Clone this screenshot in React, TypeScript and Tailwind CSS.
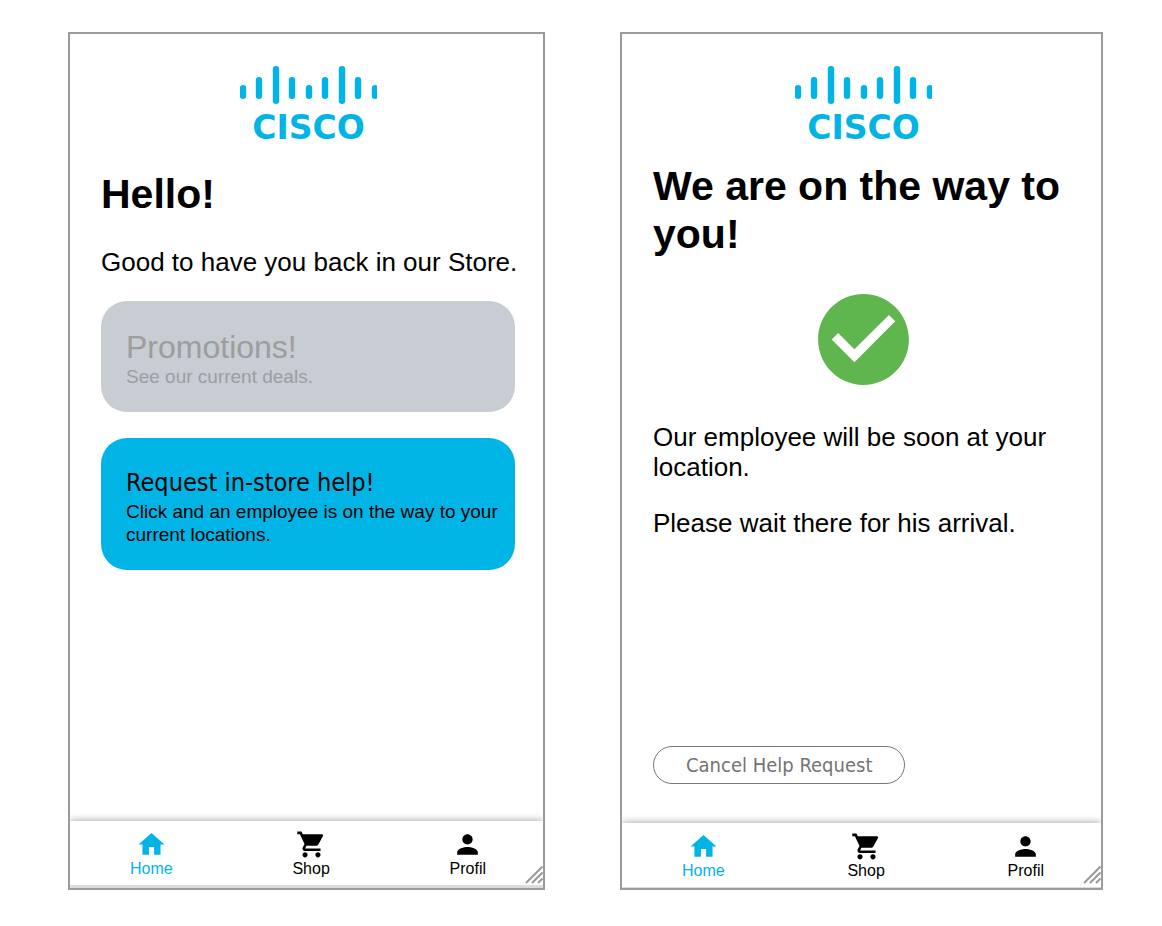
import type { ReactNode } from "react";
import { MdCheckCircle, MdHome, MdPerson, MdShoppingCart } from "react-icons/md";

const BARS: [number, number, number][] = [
  [3, 19, 33],
  [19, 11, 33],
  [36, 0, 38],
  [52, 11, 33],
  [69, 19, 33],
  [85, 11, 33],
  [102, 0, 38],
  [118, 11, 33],
  [135, 19, 33],
];

function Logo() {
  return (
    <svg width="137" height="84" viewBox="0 0 137 84" role="img" aria-label="Cisco" className="mx-auto block">
      {BARS.map(([x, top, bottom]) => (
        <rect key={x} x={x - 3.2} y={top} width="6.4" height={bottom - top} rx="3.2" fill="#00b5e6" />
      ))}
      <text
        x="68.5"
        y="72.5"
        textAnchor="middle"
        className="fill-[#00b5e6] font-['DejaVu_Sans',sans-serif] text-[33px] font-bold"
      >
        CISCO
      </text>
    </svg>
  );
}

function NavItem({ icon, label, active = false }: { icon: ReactNode; label: string; active?: boolean }) {
  return (
    <a
      href="#"
      aria-current={active ? "page" : undefined}
      className={`flex flex-col items-center text-[16px] leading-[18px] ${active ? "text-[#00b5e6]" : "text-black"}`}
    >
      {icon}
      {label}
    </a>
  );
}

function Phone({ children, footer }: { children: ReactNode; footer: string }) {
  return (
    <section className="relative flex min-h-[858px] min-w-0 flex-col border-2 border-[#9b9b9b] bg-white">
      <div className="flex flex-1 flex-col pt-8 pr-7 pl-[31px]">{children}</div>
      <div className="overflow-hidden pt-2">
        <nav className="flex h-[64px] justify-between bg-white pt-2 pr-[57px] pl-[60px] shadow-[0_0_8px_rgba(0,0,0,0.4)]">
          <NavItem active label="Home" icon={<MdHome size={31} />} />
          <NavItem label="Shop" icon={<MdShoppingCart size={31} />} />
          <NavItem label="Profil" icon={<MdPerson size={31} />} />
        </nav>
      </div>
      <div className={`bg-[#dcdcdc] ${footer}`} />
      <svg width="18" height="18" viewBox="0 0 18 18" className="absolute right-0 bottom-1" aria-hidden="true">
        <path d="M1 17 17.500 .5M7 17 17.500 6.500M13 17 17.500 12.500" stroke="#999" strokeWidth="2" />
      </svg>
    </section>
  );
}

export default function App() {
  return (
    <main className="min-h-screen bg-white pt-8 pr-[59px] pb-9 pl-[68px] font-['Liberation_Sans',Arial,sans-serif] text-black">
      <div className="grid grid-cols-[477fr_483fr] gap-[75px]">
        <Phone footer="h-[3px]">
          <Logo />
          <h1 className="mt-5 text-[41px] leading-[48px] font-bold">Hello!</h1>
          <p className="mt-[29px] text-[26px] leading-[30px] whitespace-nowrap">Good to have you back in our Store.</p>
          <button disabled className="mt-6 rounded-[26px] bg-[#c7cdd3] pt-7 pr-4 pb-6 pl-[25px] text-left text-[#9d9d9d]">
            <span className="block text-[32px] leading-[36px]">Promotions!</span>
            <span className="block text-[19px] leading-[23px]">See our current deals.</span>
          </button>
          <button className="mt-[26px] rounded-[26px] bg-[#00b5e6] pt-7 pr-4 pb-6 pl-[25px] text-left">
            <span className="block font-['DejaVu_Sans_Condensed','DejaVu_Sans',sans-serif] text-[25px] leading-[34px]">
              Request in-store help!
            </span>
            <span className="block text-[19px] leading-[23px]">
              Click and an employee is on the way to your current locations.
            </span>
          </button>
        </Phone>
        <Phone footer="h-px">
          <Logo />
          <h1 className="mt-3 text-[41px] leading-[48px] font-bold">We are on the way to you!</h1>
          <MdCheckCircle size={109} className="mx-auto mt-[27px] text-[#60b64e]" />
          <p className="mt-7 text-[26px] leading-[30px]">Our employee will be soon at your location.</p>
          <p className="mt-[26px] text-[26px] leading-[30px]">Please wait there for his arrival.</p>
          <button className="mt-auto mb-[31px] h-[38px] self-start rounded-full border border-[#777] px-8 font-['DejaVu_Sans_Condensed','DejaVu_Sans',sans-serif] text-[20px] leading-[24px] text-[#737373]">
            Cancel Help Request
          </button>
        </Phone>
      </div>
    </main>
  );
}
